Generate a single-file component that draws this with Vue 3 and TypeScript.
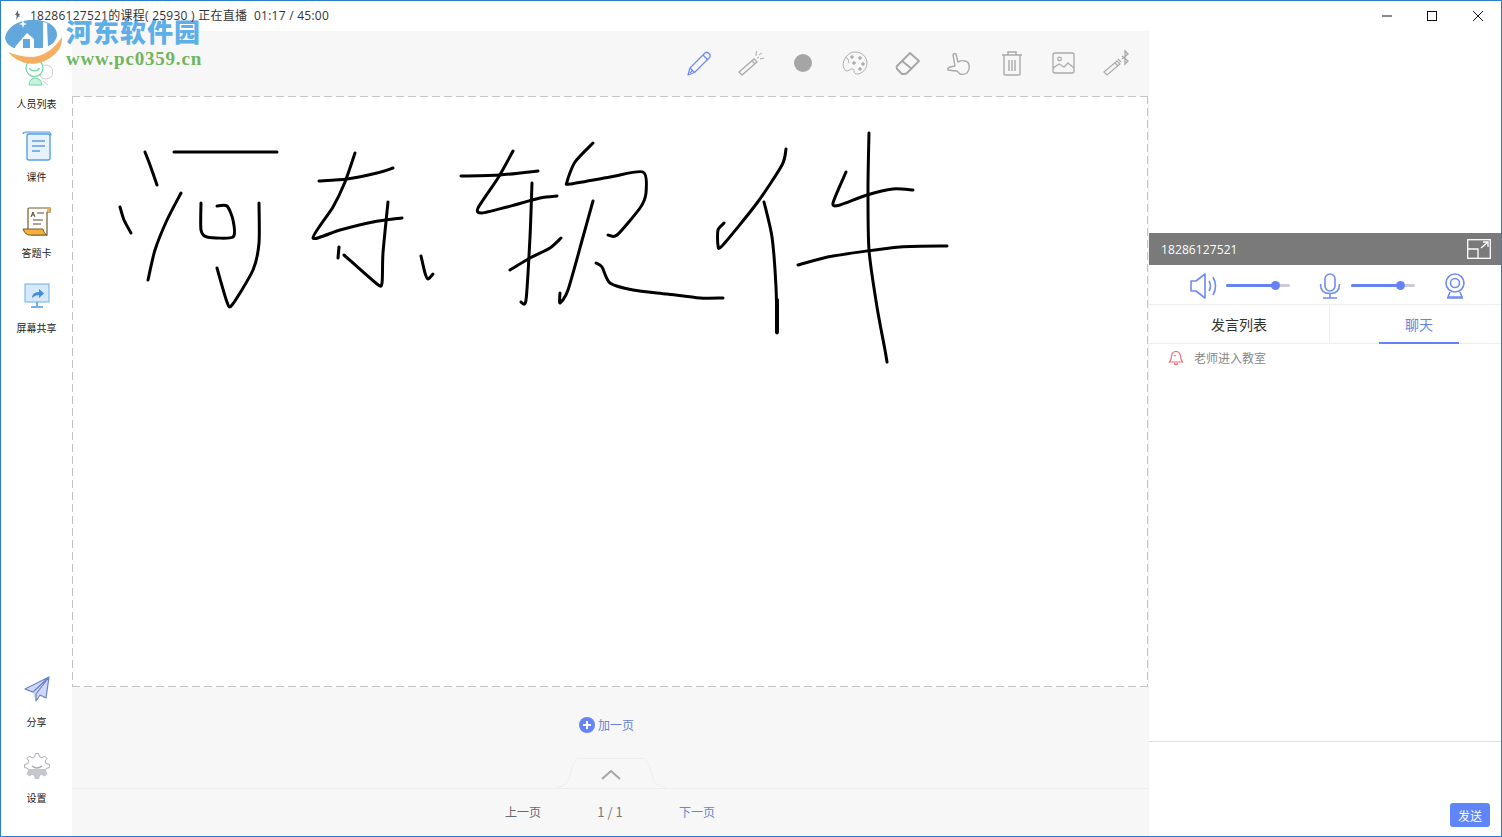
<script setup lang="ts">
type Pt = [number, number]
const strokes: Pt[][] = [
  [[145,152],[150,165],[157,185]],
  [[120,207],[124,220],[131,233]],
  [[181,193],[167,220],[155,250],[148,280]],
  [[174,152],[225,152],[277,152]],
  [[217,206],[227,206],[233,220],[233,237],[207,237],[201,230],[201,203]],
  [[259,203],[259,243],[253,270],[232,305],[227,302],[217,268]],
  [[319,181],[347,179],[377,173],[393,168]],
  [[355,153],[345,182],[333,207],[313,238],[340,230],[373,222],[402,218]],
  [[388,202],[383,253],[382,283],[377,284],[344,255]],
  [[339,247],[338,258]],
  [[421,256],[425,273],[428,279],[433,274]],
  [[513,151],[498,178],[478,208],[482,213],[507,207],[540,198],[557,196]],
  [[461,176],[500,175],[538,171]],
  [[532,183],[530,237],[526,300],[521,302]],
  [[510,270],[530,258],[550,248],[561,238]],
  [[593,143],[575,162],[567,182],[570,184],[610,177],[643,172],[646,193],[640,208],[617,235],[608,235]],
  [[593,201],[583,237],[568,290],[560,303],[560,293]],
  [[596,263],[602,267],[610,283],[633,290],[667,294],[700,298],[723,298]],
  [[786,149],[782,165],[757,203],[722,246],[718,245],[718,230],[724,223]],
  [[764,202],[772,237],[776,287],[777,333]],
  [[869,133],[868,187],[869,250],[877,307],[885,350],[887,362]],
  [[846,172],[833,203],[840,205],[867,195],[893,189],[913,190]],
  [[798,265],[833,256],[900,247],[947,246]],
]
function smooth(p: Pt[]): string {
  let d = `M${p[0][0]} ${p[0][1]}`
  for (let i = 0; i < p.length - 1; i++) {
    const a = p[Math.max(i - 1, 0)], b = p[i], c = p[i + 1], e = p[Math.min(i + 2, p.length - 1)]
    const k = 1 / 8
    d += ` C${b[0] + (c[0] - a[0]) * k} ${b[1] + (c[1] - a[1]) * k} ${c[0] - (e[0] - b[0]) * k} ${c[1] - (e[1] - b[1]) * k} ${c[0]} ${c[1]}`
  }
  return d
}
const paths = strokes.map(smooth)

function gearPath(cx: number, cy: number, rOut: number, rIn: number, teeth: number): string {
  const pts: string[] = []
  const step = (Math.PI * 2) / teeth
  for (let i = 0; i < teeth; i++) {
    const t = i * step - Math.PI / 2
    const spots: [number, number][] = [
      [rIn, t - step * 0.32], [rOut, t - step * 0.16], [rOut, t + step * 0.16], [rIn, t + step * 0.32],
    ]
    for (const [r, ang] of spots) {
      pts.push(`${(cx + r * Math.cos(ang)).toFixed(2)} ${(cy + r * Math.sin(ang)).toFixed(2)}`)
    }
  }
  return 'M' + pts.join(' L') + 'Z'
}
const gear = gearPath(14, 14, 12.5, 9.5, 8)
</script>

<template>
  <div class="window">
    <header class="titlebar">
      <svg class="app-icon" viewBox="0 0 8 10" width="8" height="10"><path d="M5 0 2 5h2L3 10l4-6H5z" fill="#666"/></svg>
      <span class="title">18286127521的课程( 25930 ) 正在直播&nbsp;&nbsp;01:17 / 45:00</span>
      <div class="win-btns">
        <button class="win-btn"><svg width="12" height="12" viewBox="0 0 12 12"><path d="M1 6h10" stroke="#111" fill="none"/></svg></button>
        <button class="win-btn mid"><svg width="12" height="12" viewBox="0 0 12 12"><rect x="1.500" y="1.500" width="9" height="9" stroke="#111" fill="none"/></svg></button>
        <button class="win-btn"><svg width="12" height="12" viewBox="0 0 12 12"><path d="M1 1l10 10M11 1 1 11" stroke="#111" fill="none"/></svg></button>
      </div>
    </header>

    <div class="body">
      <aside class="sidebar">
        <div class="side-group top">
          <div class="side-item people">
            <svg viewBox="0 0 32 32" width="32" height="32">
              <circle cx="25" cy="15" r="7" fill="none" stroke="#ccc"/>
              <path d="M22 24l5 4" stroke="#ccc" fill="none"/>
              <circle cx="13.500" cy="11" r="8.500" fill="#fff" stroke="#6ed7a2" stroke-width="1.200"/>
              <path d="M8.500 11a5.500 5 0 0 0 10 0" fill="none" stroke="#6ed7a2" stroke-width="1.400"/>
              <path d="M8 28q0-6 6-7 7 1 7 7z" fill="#c9f1dc" stroke="#6ed7a2"/>
            </svg>
            <span>人员列表</span>
          </div>
          <div class="side-item courseware">
            <svg viewBox="0 0 32 32" width="32" height="32">
              <path d="M2 4q0-2 3-2h23q2 1 2 3h-3" fill="#cfe4fa" stroke="#5b9fe3" stroke-width="1.200"/>
              <rect x="6" y="4" width="23" height="26" rx="2" fill="#e8f2fd" stroke="#5b9fe3" stroke-width="1.400"/>
              <path d="M11 11h13M11 16h13M11 21h8" stroke="#5b9fe3" stroke-width="1.400" fill="none"/>
            </svg>
            <span>课件</span>
          </div>
          <div class="side-item card">
            <svg viewBox="0 0 32 32" width="32" height="32">
              <path d="M7 24V4q0-1 1-1h21v4h-3v23H10" fill="#fff" stroke="#7a5a2a" stroke-width="1.200"/>
              <path d="M2 24h20q0 4 4 6H7q-4-2-5-6z" fill="#f4b23a" stroke="#7a5a2a"/>
              <path d="M26 3h3v4h-3z" fill="#f4b23a"/>
              <path d="M10 12l2-5 2 5M11 10h2M16 8h7M12 15h10M12 19h8" stroke="#5a4a30" fill="none"/>
            </svg>
            <span>答题卡</span>
          </div>
          <div class="side-item share-screen">
            <svg viewBox="0 0 28 28" width="28" height="28">
              <rect x="2" y="3" width="24" height="18" fill="#d5e9fb" stroke="#6cb0ec"/>
              <path d="M9 17q0-6 7-6V8l5 4.500L16 17v-3q-4 0-7 3z" fill="#3f8fdc"/>
              <path d="M14 21v4M8 26h12" stroke="#4a9ae6" stroke-width="1.600"/>
            </svg>
            <span>屏幕共享</span>
          </div>
        </div>
        <div class="side-group bottom">
          <div class="side-item send-item">
            <svg viewBox="0 0 30 30" width="30" height="30">
              <path d="M27 3 3 16l8 3 3 8 3-6 7 3z" fill="#cfd8fa"/>
              <path d="M27 3 3 15l8 3 16-15-13 17v7l4-6 6 3z" fill="none" stroke="#6a80c8" stroke-width="1.200" stroke-linejoin="round"/>
            </svg>
            <span>分享</span>
          </div>
          <div class="side-item gear-item">
            <svg viewBox="0 0 28 28" width="28" height="28">
              <defs><clipPath id="gear-low"><rect x="0" y="17" width="28" height="11"/></clipPath></defs>
              <path :d="gear" fill="#fff" stroke="#a9a9b2" stroke-linejoin="round"/>
              <path :d="gear" fill="#c6c6cf" clip-path="url(#gear-low)"/>
              <path d="M9 14q5 4 10 0" fill="none" stroke="#a9a9b2" stroke-width="1.400"/>
            </svg>
            <span>设置</span>
          </div>
        </div>
      </aside>

      <main class="main">
        <div class="toolbar">
          <div class="tool">
            <svg viewBox="0 0 28 28" width="28" height="28" fill="none" stroke="#6f8cf5" stroke-width="1.300" stroke-linejoin="round">
              <path d="M3 26l2-7L20 4q1.500-1.500 3.500 0l1 1q1.500 2 0 3.500L9.500 23.500z"/><path d="M18 6l5 5M5 19l4.500 4.500M5 24l3-3"/>
            </svg>
          </div>
          <div class="tool">
            <svg viewBox="0 0 28 28" width="28" height="28" fill="none" stroke="#aaa" stroke-width="1.300">
              <path d="M2 23l15-13 3 3-15 13zM15 12l3 3"/><path d="M20 9l2-1M19 7l.5-5M23 10l4-1M22 6l3-2" stroke-width="1"/>
            </svg>
          </div>
          <div class="tool"><span class="dot"></span></div>
          <div class="tool">
            <svg viewBox="0 0 28 28" width="28" height="28" fill="none" stroke="#b0b0b0" stroke-width="1">
              <path d="M14 3c7 0 12 5 12 11s-5 11-10 11c-4 0-2-4-4-5-3-1-5 4-8 1-3-4-2-9 1-13 2-3 5-5 9-5z"/>
              <path d="M4 8q4 1 4 6"/>
              <circle cx="11" cy="8" r="1.300" fill="#aaa"/><circle cx="19" cy="9" r="1.300" fill="#aaa"/><circle cx="22" cy="15" r="1.300" fill="#aaa"/><circle cx="19" cy="20" r="1.300" fill="#aaa"/><circle cx="13" cy="14" r="1.300" fill="#aaa"/>
            </svg>
          </div>
          <div class="tool">
            <svg viewBox="0 0 28 28" width="28" height="28" fill="none" stroke="#a5a5a5" stroke-width="1.800" stroke-linejoin="round">
              <path d="M16 4 25 12 13 24q-1 1-3 1H8l-5-5q-1-2 0-3z"/><path d="M8 12l10 8"/>
            </svg>
          </div>
          <div class="tool">
            <svg viewBox="0 0 28 28" width="28" height="28" fill="none" stroke="#aaa" stroke-width="1.400" stroke-linejoin="round">
              <path d="M7 6q1-2 3-1l2 8q4-2 7-1 4 1 4 4 1 4-2 8-3 2-7 1l-3-3q-3 0-9-1-1-2 2-3l5-1z"/>
            </svg>
          </div>
          <div class="tool">
            <svg viewBox="0 0 28 28" width="28" height="28" fill="none" stroke="#aaa" stroke-width="1.400">
              <path d="M4 6h20M10 6V3h8v3M6 6v19q0 1 1 1h14q1 0 1-1V6M11 11v11M14 11v11M17 11v11"/>
            </svg>
          </div>
          <div class="tool">
            <svg viewBox="0 0 28 28" width="28" height="28" fill="none" stroke="#aaa" stroke-width="1.300" stroke-linejoin="round">
              <rect x="3" y="4" width="21" height="20" rx="2"/><circle cx="9.500" cy="10" r="1.800"/><path d="M3 19l6-4 5 3 4-4 6 5"/>
            </svg>
          </div>
          <div class="tool">
            <svg viewBox="0 0 28 28" width="28" height="28" fill="none" stroke="#aaa" stroke-width="1.200">
              <path d="M2 23l13-11 3 3-13 11zM13 14l3 3M16 10l3 3"/><path d="M20 7l6 5-3 3V2l3 3-6 5" stroke-width="1.400"/>
            </svg>
          </div>
        </div>

        <div class="canvas">
          <svg class="ink" viewBox="72 96 1076 591" width="1076" height="591" fill="none" stroke="#000" stroke-width="3" stroke-linecap="round" stroke-linejoin="round">
            <path v-for="(d, i) in paths" :key="i" :d="d"/>
            <path d="M777 300v32" stroke-width="4"/>
          </svg>
        </div>

        <div class="add-area">
          <div class="add-page">
            <svg viewBox="0 0 16 16" width="16" height="16"><circle cx="8" cy="8" r="8" fill="#6683f5"/><path d="M8 4v8M4 8h8" stroke="#fff" stroke-width="2"/></svg>
            <span>加一页</span>
          </div>
          <div class="tab">
            <svg viewBox="0 0 110 30" width="110" height="30">
              <path d="M0 29.500q12-1 14-12 1-10 8-17h66q7 7 8 17 2 11 14 12" fill="#f7f7f7" stroke="#eee"/>
              <path d="M46 21l9-8 9 8" fill="none" stroke="#a5a5a5" stroke-width="2"/>
            </svg>
          </div>
        </div>

        <footer class="pager">
          <span class="prev">上一页</span>
          <span class="page-num">1 / 1</span>
          <span class="next">下一页</span>
        </footer>
      </main>

      <section class="right">
        <div class="video"></div>
        <div class="video-head">
          <span>18286127521</span>
          <svg viewBox="0 0 24 20" width="24" height="20" fill="none" stroke="#fff" stroke-width="1.300">
            <rect x=".7" y=".7" width="22.600" height="18.600"/><path d="M.7 10H11v9.300"/><path d="M14 9l7-6M16 3h5v5"/>
          </svg>
        </div>
        <div class="controls">
          <svg viewBox="0 0 28 26" width="28" height="26" fill="none" stroke="#6f8cf5" stroke-width="1.600" stroke-linejoin="round">
            <path d="M1 8h5l9-7v24l-9-7H1z"/><path d="M19 8q3 5 0 10M23 4q5 9 0 18"/>
          </svg>
          <div class="slider"><i class="fill"></i><i class="knob"></i></div>
          <svg class="mic" viewBox="0 0 28 26" width="28" height="26" fill="none" stroke="#6f8cf5" stroke-width="1.600">
            <rect x="9" y="1" width="10" height="17" rx="5"/><path d="M4.500 11q0 9.500 9.500 9.500T23.500 11M14 21v4M7 25h14"/>
          </svg>
          <div class="slider"><i class="fill"></i><i class="knob"></i></div>
          <svg class="cam" viewBox="0 0 28 26" width="28" height="26" fill="none" stroke="#6f8cf5" stroke-width="1.600">
            <circle cx="14" cy="10" r="9"/><circle cx="14" cy="10" r="4.500"/><path d="M9 19l-2 5h14l-2-5M6 25h16"/>
          </svg>
        </div>
        <div class="tabs">
          <div class="tab-item">发言列表</div>
          <div class="tab-item active">聊天</div>
        </div>
        <div class="chat">
          <div class="msg">
            <svg viewBox="0 0 16 16" width="16" height="16" fill="none" stroke="#ee6a6f" stroke-width="1.200">
              <path d="M8 1.500q4 0 4.500 5 .3 3 2 5.500h-13q1.700-2.500 2-5.500Q4 1.500 8 1.500zM6 13.500q2 2 4 0"/><path d="M6 6q1-1 2 0" stroke-width="1"/>
            </svg>
            <span>老师进入教室</span>
          </div>
        </div>
        <div class="input">
          <button class="send">发送</button>
        </div>
      </section>
    </div>

    <div class="watermark">
      <svg class="wm-logo" viewBox="0 5 70 65" width="70" height="65">
        <path d="M5 38C7 26 20 19 35 20 48 20 58 27 57 36 55 45 45 49 36 48H14C9 46 6 43 5 38Z" fill="#5ba4dc"/>
        <path d="M18 12l2 5-4-1z" fill="#5ba4dc"/>
        <path d="M15 47 27 33l7 6v9H15z" fill="#fff"/>
        <path d="M23 39h7v9h-7z" fill="#5ba4dc"/>
        <path d="M43 22l4 1 1 25-5 1z" fill="#fff"/>
        <path d="M23 20l1 3 3 1-3 1-1 3-1-3-3-1 3-1z" fill="#fff"/>
        <path d="M8 52Q20 57 33 57 50 55 62 37 63 50 50 58 38 66 25 63 15 60 8 52Z" fill="#f6ab5a"/>
      </svg>
      <div class="wm-text">
        <div class="wm-cn">河东软件园</div>
        <div class="wm-en">www.pc0359.cn</div>
      </div>
    </div>
  </div>
</template>

<style scoped>
.window {
  position: relative;
  box-sizing: border-box;
  width: 1502px;
  height: 837px;
  border: 1px solid #2a7fcb;
  background: #fff;
  display: flex;
  flex-direction: column;
  overflow: hidden;
  font-family: "Noto Sans CJK SC", "Open Sans", sans-serif;
  color: #222;
}
.titlebar {
  position: relative;
  z-index: 2;
  height: 30px;
  flex: none;
  display: flex;
  align-items: center;
  padding-left: 12px;
}
.app-icon { margin-right: 9px; margin-top: -2px; }
.title {
  font-size: 12px;
  line-height: 14px;
  color: #333;
  margin-top: -1px;
  letter-spacing: .25px;
  font-family: "Open Sans", "Noto Sans CJK SC", sans-serif;
}
.win-btns { margin-left: auto; display: flex; margin-top: -1px; }
.win-btn {
  width: 45.500px;
  height: 30px;
  border: 0;
  background: none;
  padding: 0;
  display: flex;
  align-items: center;
  justify-content: center;
}
.win-btn.mid svg { margin-left: -2px; }
.body { flex: 1; display: flex; min-height: 0; }
.sidebar {
  width: 71px;
  flex: none;
  display: flex;
  flex-direction: column;
  justify-content: space-between;
}
.side-item {
  display: flex;
  flex-direction: column;
  align-items: center;
  font-size: 10px;
  line-height: 14px;
  color: #222;
}
.side-group.top { padding-top: 26px; }
.side-item.people span { margin-top: 8px; }
.side-item.courseware { margin-top: 19px; }
.side-item.courseware span { margin-top: 8px; }
.side-item.card { margin-top: 21px; }
.side-item.card span { margin-top: 9px; }
.side-item.share-screen { margin-top: 21px; }
.side-item.share-screen span { margin-top: 12px; }
.side-group.bottom { padding-bottom: 31px; }
.send-item span { margin-top: 11px; }
.gear-item { margin-top: 23px; }
.gear-item span { margin-top: 11px; }

.main { width: 1076px; flex: none; display: flex; flex-direction: column; background: #f7f7f7; }
.toolbar {
  height: 65px;
  flex: none;
  display: flex;
  justify-content: flex-end;
  align-items: center;
  padding: 0 6px 2px 0;
  box-sizing: border-box;
}
.tool { width: 52.100px; display: flex; justify-content: center; align-items: center; }
.dot { width: 18px; height: 18px; border-radius: 50%; background: #a5a5a5; }
.canvas {
  position: relative;
  height: 591px;
  flex: none;
  box-sizing: border-box;
  background-color: #fff;
  background-image:
    linear-gradient(to right, #c4c4c4 8px, transparent 8px),
    linear-gradient(to right, #c4c4c4 8px, transparent 8px),
    linear-gradient(to bottom, #c4c4c4 8px, transparent 8px),
    linear-gradient(to bottom, #c4c4c4 8px, transparent 8px);
  background-size: 12px 1px, 12px 1px, 1px 12px, 1px 12px;
  background-position: 0 0, 0 100%, 0 0, 100% 0;
  background-repeat: repeat-x, repeat-x, repeat-y, repeat-y;
}
.ink { position: absolute; left: 0; top: 0; display: block; }
.add-area {
  flex: 1;
  display: flex;
  flex-direction: column;
  align-items: center;
  min-height: 0;
}
.add-page {
  display: flex;
  align-items: center;
  gap: 3px;
  margin-top: 30px;
  font-size: 12px;
  line-height: 16px;
  color: #6683d5;
  margin-left: -7px;
}
.tab { margin-top: auto; height: 30px; margin-left: 2px; }
.tab svg { display: block; }
.pager {
  height: 48px;
  flex: none;
  box-sizing: border-box;
  border-top: 1px solid #eee;
  display: flex;
  justify-content: center;
  align-items: center;
  font-size: 12px;
  padding-bottom: 2px;
}
.pager span { width: 87px; text-align: center; }
.prev { color: #667; }
.page-num { color: #777; font-size: 13px; }
.next { color: #5f86e0; }

.right { flex: 1; display: flex; flex-direction: column; min-width: 0; border-left: 1px solid #f3f3f3; }
.video { height: 202px; flex: none; }
.video-head {
  height: 32px;
  flex: none;
  background: #7a7a7a;
  color: #fff;
  font-size: 12px;
  letter-spacing: .1px;
  display: flex;
  align-items: center;
  justify-content: space-between;
  padding: 0 10px 0 12px;
  font-family: "Open Sans", sans-serif;
}
.controls {
  height: 40px;
  flex: none;
  box-sizing: border-box;
  display: flex;
  align-items: center;
  padding: 2px 0 0 41px;
  border-bottom: 1px solid #eee;
}
.slider { position: relative; width: 64px; height: 3px; margin-left: 8px; background: #c9ccd4; border-radius: 2px; }
.fill { position: absolute; left: 0; top: 0; height: 3px; width: 49px; background: #6683f5; border-radius: 2px; }
.knob { position: absolute; left: 45px; top: -3px; width: 9px; height: 9px; border-radius: 50%; background: #6683f5; }
.mic { margin-left: 26px; margin-right: -1px; }
.cam { margin-left: 26px; }
.tabs { height: 39px; flex: none; box-sizing: border-box; display: flex; border-bottom: 1px solid #eee; }
.tab-item {
  position: relative;
  flex: 1;
  text-align: center;
  line-height: 38px;
  font-size: 14px;
  color: #333;
}
.tab-item:first-child { flex: none; width: 180px; border-right: 1px solid #eee; }
.tab-item.active { color: #5f86e0; padding-left: 7px; }
.tab-item.active::after {
  content: "";
  position: absolute;
  left: 50%;
  bottom: -1px;
  width: 80px;
  height: 2px;
  margin-left: -36.500px;
  background: #6683f5;
}
.chat { flex: 1; padding: 6px 19px; min-height: 0; }
.msg { display: flex; align-items: center; gap: 10px; font-size: 12px; color: #888; line-height: 16px; }
.input { height: 95px; flex: none; box-sizing: border-box; border-top: 1px solid #ddd; display: flex; justify-content: flex-end; align-items: flex-end; padding: 0 11px 9px 0; }
.send {
  width: 40px;
  height: 24px;
  border: 0;
  padding: 0;
  border-radius: 3px;
  background: #5f85fb;
  color: #fff;
  font-size: 12px;
  font-family: inherit;
}
.watermark {
  position: absolute;
  left: -1px;
  top: 4px;
  display: flex;
  pointer-events: none;
}
.wm-logo { margin-right: -4px; opacity: .95; }
.wm-text { margin-top: 14px; }
.wm-cn { font-size: 26px; line-height: 24px; font-weight: 900; color: #5eaee8; letter-spacing: 1px; white-space: nowrap; }
.wm-en { font-size: 19px; line-height: 20px; margin-top: 6px; font-weight: 700; color: #6fb55f; font-family: "Liberation Serif", serif; letter-spacing: .8px; white-space: nowrap; }
</style>
